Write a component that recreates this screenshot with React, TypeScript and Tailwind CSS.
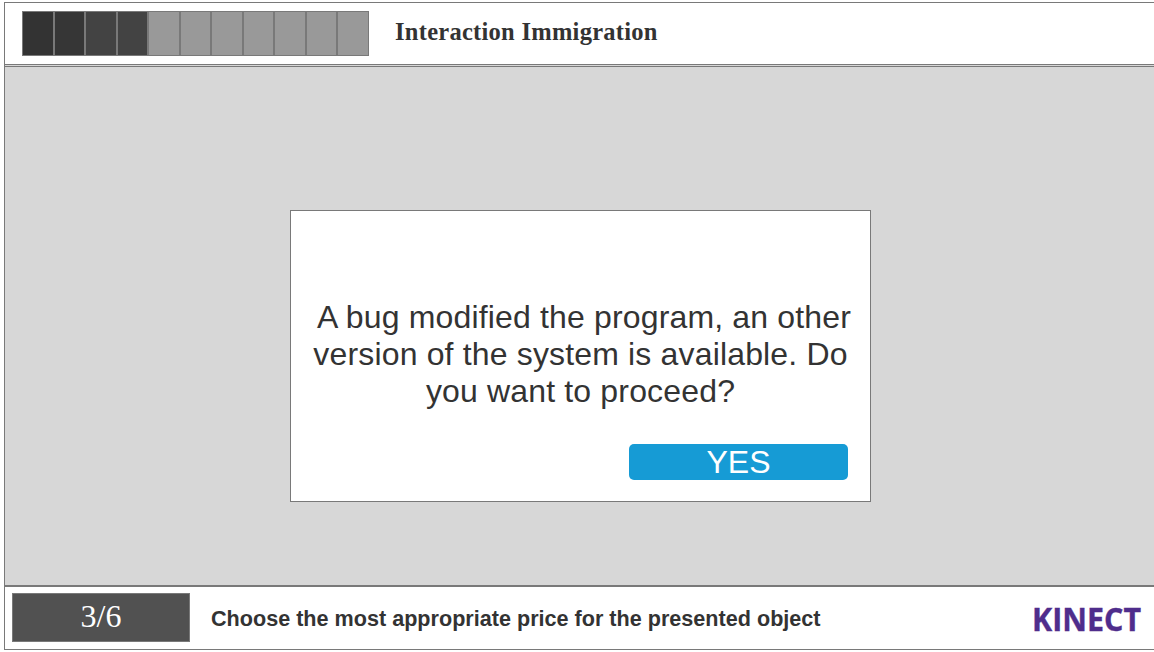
const steps = [
  'w-8 bg-[#333333]',
  'w-[31px] bg-[#363636]',
  'w-8 bg-[#434343]',
  'w-[31px] bg-[#434343]',
  'w-8 bg-[#999999]',
  'w-[31px] bg-[#999999]',
  'w-8 bg-[#999999]',
  'w-[31px] bg-[#999999]',
  'w-8 bg-[#999999]',
  'w-[31px] bg-[#999999]',
  'w-8 bg-[#999999]',
];

function Header() {
  return (
    <header className="flex h-[63px] shrink-0 items-start border-y border-[#797979] bg-white pl-[17px] pt-2">
      <div className="flex h-[45px]">
        {steps.map((step, i) => (
          <div key={i} className={`h-full border border-[#797979] ${step}`} />
        ))}
      </div>
      <h1 className="ml-[26px] mt-[7px] whitespace-nowrap font-['Liberation_Serif',serif] text-[24.5px] font-bold leading-7 tracking-[0.27px] text-[#333333]">
        Interaction Immigration
      </h1>
    </header>
  );
}

function Dialog() {
  return (
    <section className="ml-[285px] mt-[143px] flex h-[292px] w-[581px] flex-col border border-[#797979] bg-white">
      <p className="mt-[88px] whitespace-nowrap text-center text-[32px] leading-[37px] tracking-[0.16px] text-[#333333]">
        <span className="ml-[7px]">A bug modified the program, an other</span>
        <br />
        version of the system is available. Do
        <br />
        you want to proceed?
      </p>
      <button className="mr-[22px] mt-[34px] h-9 w-[219px] self-end rounded-[5px] bg-[#169bd5] text-[32px] leading-9 text-white">
        YES
      </button>
    </section>
  );
}

function Footer() {
  return (
    <footer className="flex h-[65px] shrink-0 items-start border-b border-t-2 border-[#797979] bg-white pl-[7px] pt-1.5">
      <div className="h-[49px] w-[178px] border border-[#797979] bg-[#515151] text-center font-['Liberation_Serif',serif] text-[32px] leading-[45px] text-white">
        3/6
      </div>
      <p className="ml-[21px] mt-3 whitespace-nowrap text-[21.6px] font-bold leading-7 text-[#333333]">
        Choose the most appropriate price for the presented object
      </p>
      <svg
        className="-mt-0.5 ml-auto mr-2 h-[54px] w-[116px] shrink-0"
        viewBox="0 0 116 54"
        role="img"
        aria-label="KINECT"
      >
        <text
          x="2"
          y="39.5"
          textLength="109"
          lengthAdjust="spacingAndGlyphs"
          fill="#4f2d8c"
          stroke="#4f2d8c"
          strokeWidth="0.4"
          className="font-['Open_Sans',sans-serif] text-[32px] font-bold"
        >
          KINECT
        </text>
      </svg>
    </footer>
  );
}

export default function App() {
  return (
    <div className="h-[652px] w-full overflow-hidden bg-white pl-1 pt-0.5 font-['Liberation_Sans',sans-serif]">
      <div className="flex h-[648px] flex-col border-l border-[#797979] bg-[#d7d7d7]">
        <Header />
        <main className="mt-px h-[519px] shrink-0 border-t border-[#797979] bg-[#d7d7d7]">
          <Dialog />
        </main>
        <Footer />
      </div>
    </div>
  );
}
